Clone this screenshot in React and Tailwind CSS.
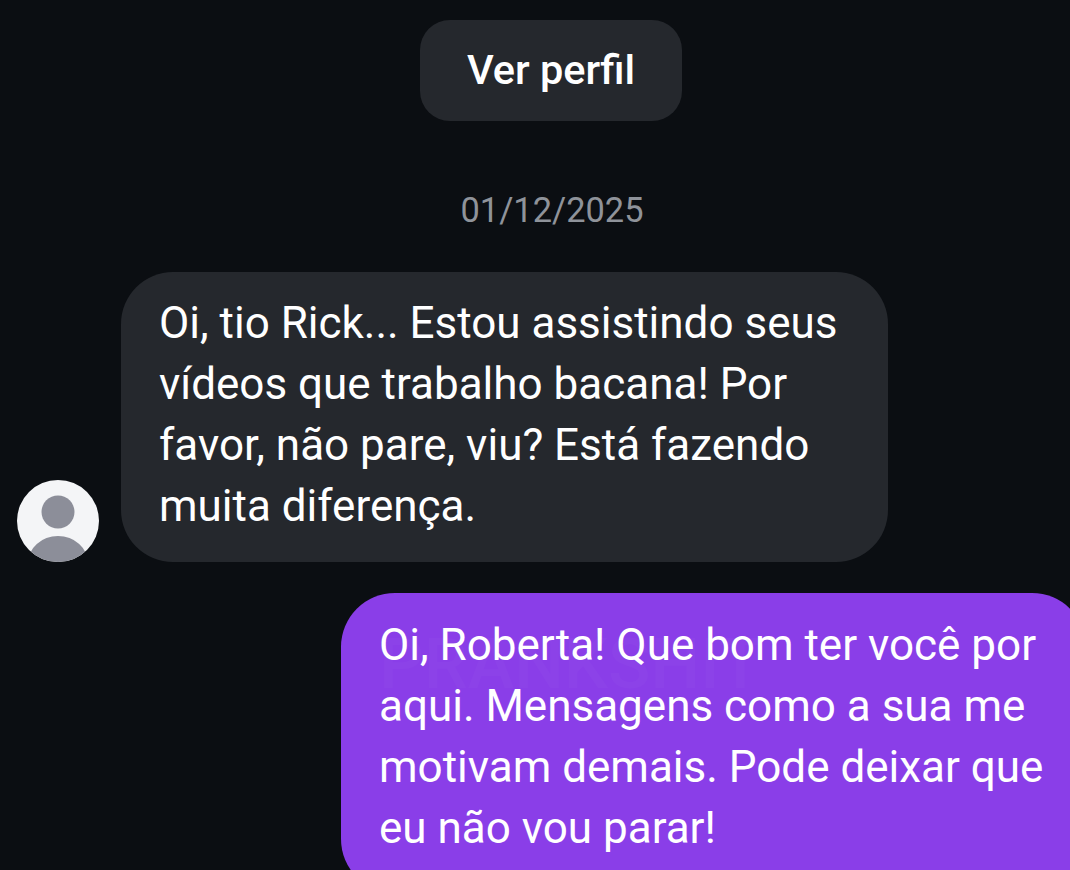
export default function App() {
  return (
    <div className="w-[1070px] h-[870px] overflow-hidden bg-[#0b0e12] flex flex-col font-['Roboto',sans-serif] text-white">
      <div className="flex justify-center pt-5 pl-[32px]">
        <div className="w-[262px] h-[101px] rounded-[30px] bg-[#25282d] flex items-center justify-center text-[41.5px] font-medium pb-[1px]">Ver perfil</div>
      </div>
      <div className="mt-[66px] text-center text-[34.4px] leading-[46px] text-[#8f939a] pl-[34px]">01/12/2025</div>
      <div className="mt-[39px] flex items-end pl-[17px] gap-[22px]">
        <svg width="82" height="82" viewBox="0 0 82 82" className="shrink-0">
          <defs><clipPath id="c"><circle cx="41" cy="41" r="41" /></clipPath></defs>
          <circle cx="41" cy="41" r="41" fill="#f4f5f7" />
          <g clipPath="url(#c)">
            <circle cx="41" cy="32" r="16.5" fill="#8c8e99" />
            <ellipse cx="41" cy="83" rx="30" ry="27" fill="#8c8e99" />
          </g>
        </svg>
        <div className="w-[767px] h-[290px] rounded-[52px] bg-[#25282d] pl-[38px] pt-[21px] text-[44px] leading-[61px] whitespace-nowrap">
          Oi, tio Rick... Estou assistindo seus<br />vídeos que trabalho bacana! Por<br />favor, não pare, viu? Está fazendo<br />muita diferença.
        </div>
      </div>
      <div className="mt-[31px] flex justify-start pl-[341px]">
        <div className="relative w-[745px] h-[300px] shrink-0 rounded-[54px] bg-[#8a3ee8] pl-[38px] pt-[22px] text-[44px] leading-[61px] whitespace-nowrap">
          <span className="absolute left-[38px] top-[36px] text-[70px] leading-[70px] font-medium text-white/[0.025]">PRANKSHIT</span>
          <span className="relative">Oi, Roberta! Que bom ter você por<br />aqui. Mensagens como a sua me<br />motivam demais. Pode deixar que<br />eu não vou parar!</span>
        </div>
      </div>
    </div>
  );
}
